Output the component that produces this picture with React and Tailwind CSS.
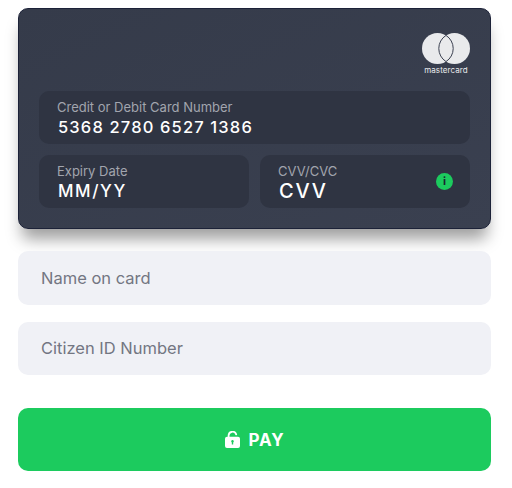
const Field = ({ label, value, valueClass, children, className }) => (
  <div className={`flex h-[53px] items-center justify-between rounded-[10px] bg-[#2f3442] px-[18px] ${className}`}>
    <div className="flex flex-col pt-[1px]">
      <span className="text-[13px] leading-[16px] text-[#a2a5ae]">{label}</span>
      <span className={`pl-[1px] pt-[1px] font-medium leading-[22px] text-white ${valueClass}`}>{value}</span>
    </div>
    {children}
  </div>
);

const Mastercard = () => (
  <div className="flex flex-col items-center">
    <svg width="48" height="31" viewBox="0 0 48 31">
      <circle cx="15.500" cy="15.500" r="15.500" fill="#e9eaec" />
      <circle cx="32.500" cy="15.500" r="15.500" fill="#e9eaec" />
      <path d="M24 2.400a15.500 15.500 0 0 1 0 26.200a15.500 15.500 0 0 1 0-26.200z" fill="#e9eaec" stroke="#3a4050" strokeWidth="1" />
    </svg>
    <span className="mt-[2px] text-[8px] leading-[9px] tracking-[0.1px] text-[#e9eaec]">mastercard</span>
  </div>
);

const App = () => {
  return (
    <div className="h-[488px] w-[512px] overflow-hidden bg-white pl-[18px] pr-[21px] pt-2 font-['Inter',sans-serif]">
      <div className="h-[221px] rounded-[10px] border border-[#1c2238] bg-gradient-to-br from-[#353b4a] to-[#3a4050] px-5 pt-6 shadow-[0_14px_16px_-4px_rgba(0,0,0,0.38)]">
        <div className="flex h-[58px] justify-end">
          <Mastercard />
        </div>
        <Field label="Credit or Debit Card Number" value="5368 2780 6527 1386" valueClass="text-[16.5px] tracking-[1.15px]" />
        <div className="mt-[11px] grid grid-cols-2 gap-[11px]">
          <Field label="Expiry Date" value="MM/YY" valueClass="text-[17px] tracking-[1.6px]" />
          <Field label="CVV/CVC" value="CVV" valueClass="text-[20px] tracking-[1.8px]" className="pr-[17px]">
            <div className="flex h-[17px] w-[17px] items-center justify-center rounded-full bg-[#1ccb5e] text-[11px] font-bold leading-none text-[#1a2530]">
              i
            </div>
          </Field>
        </div>
      </div>
      <div className="mt-[22px] flex h-[54px] items-center rounded-[10px] bg-[#f0f1f6] px-[23px] text-[16.5px] text-[#737682]">
        Name on card
      </div>
      <div className="mt-[17px] flex h-[53px] items-center rounded-[10px] bg-[#f0f1f6] px-[23px] text-[16.5px] text-[#737682]">
        Citizen ID Number
      </div>
      <button className="mt-[33px] flex h-[63px] w-full items-center justify-center gap-[9px] rounded-[10px] bg-[#1ccb5e] pt-[2px] text-[17px] font-bold tracking-[0.8px] text-white">
        <svg width="15" height="17" viewBox="0 0 15 17" fill="none" className="-mt-[3px]">
          <path d="M3.600 6.500V4.600a3.900 3.900 0 0 1 7.600-1.200" stroke="white" strokeWidth="1.800" strokeLinecap="round" />
          <path fillRule="evenodd" clipRule="evenodd" d="M2 5.800h11a2 2 0 0 1 2 2v7.200a2 2 0 0 1-2 2H2a2 2 0 0 1-2-2V7.800a2 2 0 0 1 2-2zM7.500 9a1.300 1.300 0 0 0-.7 2.400v2.200h1.400v-2.200A1.300 1.300 0 0 0 7.500 9z" fill="white" />
        </svg>
        PAY
      </button>
    </div>
  );
};

export default App;
